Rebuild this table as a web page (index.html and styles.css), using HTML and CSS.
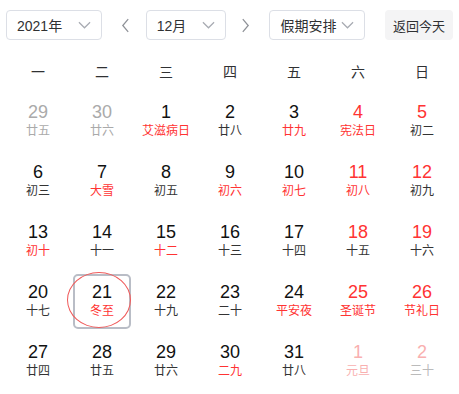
FILE: index.html
```html
<!DOCTYPE html>
<html lang="zh-CN">
<head>
<meta charset="utf-8">
<link rel="stylesheet" href="styles.css">
</head>
<body>
<div class="cal">
  <div class="toolbar">
    <div class="select sel-year"><span>2021年</span><svg class="chev" viewBox="0 0 14 8"><path d="M1 1 L7 7 L13 1"/></svg></div>
    <button class="nav nav-prev"><svg viewBox="0 0 10 16"><path d="M8 1 L2 8 L8 15"/></svg></button>
    <div class="select sel-month"><span>12月</span><svg class="chev" viewBox="0 0 14 8"><path d="M1 1 L7 7 L13 1"/></svg></div>
    <button class="nav nav-next"><svg viewBox="0 0 10 16"><path d="M2 1 L8 8 L2 15"/></svg></button>
    <div class="select sel-holiday"><span>假期安排</span><svg class="chev" viewBox="0 0 14 8"><path d="M1 1 L7 7 L13 1"/></svg></div>
    <button class="today-btn">返回今天</button>
  </div>
  <div class="weekdays">
    <div>一</div><div>二</div><div>三</div><div>四</div><div>五</div><div>六</div><div>日</div>
  </div>
  <div class="days">
    <div class="day other"><div class="num">29</div><div class="lunar">廿五</div></div>
    <div class="day other"><div class="num">30</div><div class="lunar">廿六</div></div>
    <div class="day"><div class="num">1</div><div class="lunar red">艾滋病日</div></div>
    <div class="day"><div class="num">2</div><div class="lunar">廿八</div></div>
    <div class="day"><div class="num">3</div><div class="lunar red">廿九</div></div>
    <div class="day"><div class="num red">4</div><div class="lunar red">宪法日</div></div>
    <div class="day"><div class="num red">5</div><div class="lunar">初二</div></div>

    <div class="day"><div class="num">6</div><div class="lunar">初三</div></div>
    <div class="day"><div class="num">7</div><div class="lunar red">大雪</div></div>
    <div class="day"><div class="num">8</div><div class="lunar">初五</div></div>
    <div class="day"><div class="num">9</div><div class="lunar red">初六</div></div>
    <div class="day"><div class="num">10</div><div class="lunar red">初七</div></div>
    <div class="day"><div class="num red">11</div><div class="lunar red">初八</div></div>
    <div class="day"><div class="num red">12</div><div class="lunar">初九</div></div>

    <div class="day"><div class="num">13</div><div class="lunar red">初十</div></div>
    <div class="day"><div class="num">14</div><div class="lunar">十一</div></div>
    <div class="day"><div class="num">15</div><div class="lunar red">十二</div></div>
    <div class="day"><div class="num">16</div><div class="lunar">十三</div></div>
    <div class="day"><div class="num">17</div><div class="lunar">十四</div></div>
    <div class="day"><div class="num red">18</div><div class="lunar">十五</div></div>
    <div class="day"><div class="num red">19</div><div class="lunar">十六</div></div>

    <div class="day"><div class="num">20</div><div class="lunar">十七</div></div>
    <div class="day today"><span class="ring"></span><div class="num">21</div><div class="lunar red">冬至</div></div>
    <div class="day"><div class="num">22</div><div class="lunar">十九</div></div>
    <div class="day"><div class="num">23</div><div class="lunar">二十</div></div>
    <div class="day"><div class="num">24</div><div class="lunar red">平安夜</div></div>
    <div class="day"><div class="num red">25</div><div class="lunar red">圣诞节</div></div>
    <div class="day"><div class="num red">26</div><div class="lunar red">节礼日</div></div>

    <div class="day"><div class="num">27</div><div class="lunar">廿四</div></div>
    <div class="day"><div class="num">28</div><div class="lunar">廿五</div></div>
    <div class="day"><div class="num">29</div><div class="lunar">廿六</div></div>
    <div class="day"><div class="num">30</div><div class="lunar red">二九</div></div>
    <div class="day"><div class="num">31</div><div class="lunar">廿八</div></div>
    <div class="day next"><div class="num red">1</div><div class="lunar red">元旦</div></div>
    <div class="day next"><div class="num red">2</div><div class="lunar">三十</div></div>
  </div>
</div>
</body>
</html>
```
FILE: styles.css
```css
html, body {
  margin: 0;
  padding: 0;
  background: #fff;
}
body {
  font-family: "Liberation Sans", "Noto Sans CJK SC", sans-serif;
  color: #222;
}
.cal {
  width: 459px;
  padding: 10px 6px 0;
  box-sizing: border-box;
}
.toolbar {
  display: flex;
  align-items: center;
  height: 30px;
}
.select {
  box-sizing: border-box;
  height: 30px;
  border: 1px solid #dcdfe6;
  border-radius: 4px;
  display: flex;
  align-items: center;
  justify-content: space-between;
  padding: 0 10px 0 10px;
  font-size: 14px;
  color: #303133;
}
.sel-year { width: 96px; }
.sel-month { width: 80px; }
.sel-holiday { width: 96px; }
.chev {
  width: 13px;
  height: 8px;
  fill: none;
  stroke: #a8abb2;
  stroke-width: 1.3;
}
.nav {
  width: 24px;
  height: 30px;
  padding: 0;
  border: 0;
  background: none;
  display: flex;
  align-items: center;
  justify-content: center;
}
.nav svg {
  width: 9px;
  height: 15px;
  fill: none;
  stroke: #8f9298;
  stroke-width: 1.4;
}
.nav-prev { margin: 0 8px 0 12px; }
.nav-next { margin: 0 12px 0 8px; }
.today-btn {
  margin-left: 20px;
  width: 68px;
  height: 30px;
  border: 0;
  border-radius: 4px;
  background: #f4f4f5;
  font-family: "Liberation Sans", "Noto Sans CJK SC", sans-serif;
  font-size: 13px;
  color: #303133;
  padding: 0;
}
.weekdays {
  display: grid;
  grid-template-columns: repeat(7, 64px);
  margin-top: 22px;
  height: 20px;
  line-height: 20px;
  font-size: 14px;
  color: #303133;
  text-align: center;
}
.days {
  display: grid;
  grid-template-columns: repeat(7, 64px);
  grid-auto-rows: 55px;
  row-gap: 5px;
  margin-top: 12px;
}
.day {
  position: relative;
  box-sizing: border-box;
  margin: 0 3px;
  padding-top: 7px;
  text-align: center;
}
.num {
  font-size: 18px;
  line-height: 22px;
  color: #111;
}
.lunar {
  font-size: 12px;
  line-height: 16px;
  color: #333;
}
.red { color: #ff3333; }
.other .num, .other .lunar { color: #aaa; }
.next .num.red, .next .lunar.red { color: #f9b0b0; }
.next .lunar { color: #bbb; }
.today {
  border: 2px solid #b9bdc6;
  border-radius: 5px;
  padding-top: 5px;
}
.ring {
  position: absolute;
  left: -8px;
  top: -4px;
  width: 64px;
  height: 56px;
  box-sizing: border-box;
  border: 1px solid #f05a5a;
  border-radius: 50%;
}
```
